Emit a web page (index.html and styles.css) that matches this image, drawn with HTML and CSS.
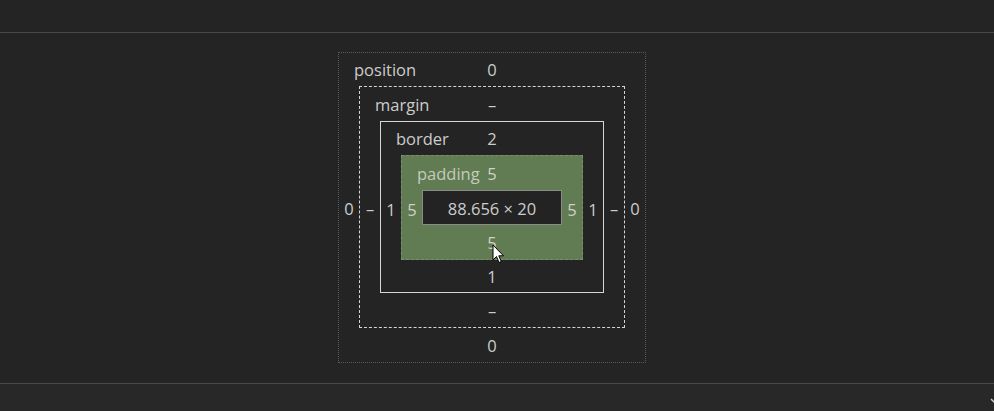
FILE: index.html
```html
<!DOCTYPE html>
<html>
<head>
<meta charset="utf-8">
<link rel="stylesheet" href="styles.css">
</head>
<body>
<div class="app">
  <header class="topbar"></header>
  <main class="pane">
    <div class="layer pos">
      <div class="row top"><span class="label">position</span><span class="val">0</span><span></span></div>
      <div class="side">0</div>
      <div class="layer margin">
        <div class="row top"><span class="label">margin</span><span class="val">–</span><span></span></div>
        <div class="side">–</div>
        <div class="layer border">
          <div class="row top"><span class="label">border</span><span class="val">2</span><span></span></div>
          <div class="side">1</div>
          <div class="layer padding">
            <div class="row top"><span class="label">padding</span><span class="val">5</span><span></span></div>
            <div class="side">5</div>
            <div class="content">88.656 × 20</div>
            <div class="side">5</div>
            <div class="row bottom"><span></span><span class="val">5</span><span></span></div>
          </div>
          <div class="side">1</div>
          <div class="row bottom"><span></span><span class="val">1</span><span></span></div>
        </div>
        <div class="side">–</div>
        <div class="row bottom"><span></span><span class="val">–</span><span></span></div>
      </div>
      <div class="side">0</div>
      <div class="row bottom"><span></span><span class="val">0</span><span></span></div>
    </div>
    <svg class="cursor" width="13" height="20" viewBox="0 0 13 20"><path d="M1 1 L1 16 L4.5 12.5 L7 18.5 L9.3 17.5 L6.8 11.8 L11.5 11.8 Z" fill="#fff" stroke="#000" stroke-width="1" stroke-linejoin="round"/></svg>
  </main>
  <footer class="bottombar">
    <svg class="chev" width="12" height="12" viewBox="0 0 12 12"><path d="M2 4 L6 8 L10 4" fill="none" stroke="#c8c8c8" stroke-width="1.5"/></svg>
  </footer>
</div>
</body>
</html>
```

FILE: styles.css
```css
* { box-sizing: border-box; }
html, body { margin: 0; padding: 0; }
body {
  background: #242424;
  font-family: "Open Sans", "Noto Sans", sans-serif;
  font-size: 16.5px;
  color: #cccccc;
  width: 994px;
  height: 411px;
  overflow: hidden;
}
.app { display: flex; flex-direction: column; height: 411px; }
.topbar { height: 33px; border-bottom: 1px solid #474747; background: #242424; flex: none; }
.pane {
  height: 350px;
  flex: none;
  display: flex;
  justify-content: center;
  align-items: flex-start;
  padding-top: 19px;
  padding-right: 10px;
  position: relative;
}
.bottombar {
  flex: 1;
  border-top: 1px solid #4a4a4a;
  background: #282828;
  display: flex;
  justify-content: flex-end;
  align-items: center;
  overflow: hidden;
  padding-top: 6px;
}
.chev { margin-right: -7px; }

.layer {
  display: grid;
  grid-template-columns: 20px auto 20px;
  align-items: stretch;
}
.row {
  grid-column: 1 / 4;
  display: grid;
  grid-template-columns: 1fr auto 1fr;
  align-items: center;
  line-height: 1;
}
.label { padding-left: 15px; white-space: nowrap; }
.val { text-align: center; }
.side {
  display: flex;
  align-items: center;
  justify-content: center;
  padding-top: 3px;
}
.pos { border: 1px dotted #5a5a5a; grid-template-rows: 33px auto 34px; }
.margin { border: 1px dashed #d6d6d6; grid-template-rows: 34px auto 34px; }
.border { border: 1px solid #d6d6d6; grid-template-rows: 33px auto 32px; }
.padding {
  border: 1px dashed #7d8f72;
  background: #617b52;
  grid-template-rows: 34px auto 34px;
  color: #cdd3c8;
}
.padding .label { color: #c3cbbd; }
.row { padding-top: 2px; }
.content {
  width: 140px;
  height: 35px;
  border: 1px solid #8a8a8a;
  background: #232323;
  display: flex;
  align-items: center;
  justify-content: center;
  color: #cccccc;
  padding-top: 1px;
}
.cursor { position: absolute; left: 492px; top: 211px; }
```
